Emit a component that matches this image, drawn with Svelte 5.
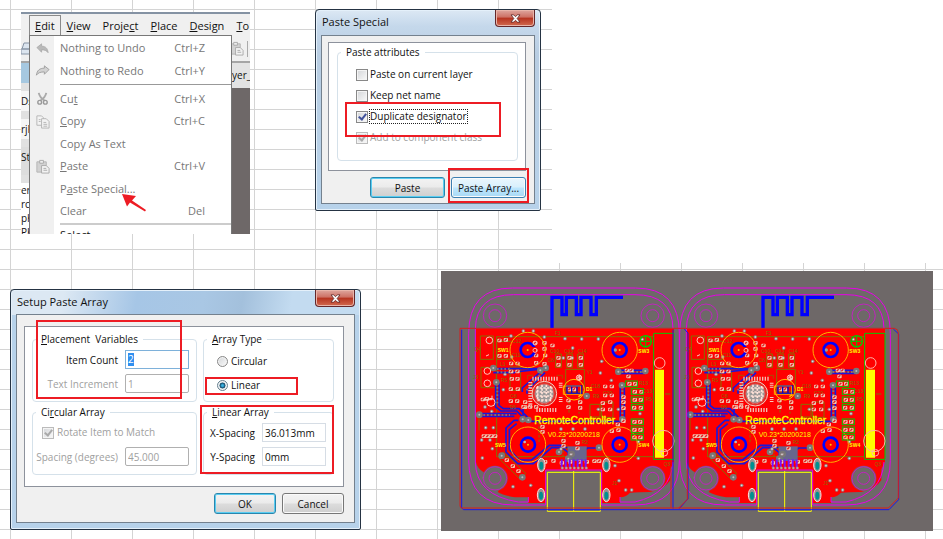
<script>
  const menus = [['', 'E', 'dit'], ['', 'V', 'iew'], ['Proje', 'c', 't'], ['', 'P', 'lace'], ['', 'D', 'esign'], ['', 'T', 'o']];
  const history = [
    { icon: 'undo', label: ['Nothing to Undo', '', ''], keys: 'Ctrl+Z' },
    { icon: 'redo', label: ['Nothing to Redo', '', ''], keys: 'Ctrl+Y' }
  ];
  const clipboard = [
    { icon: 'cut', label: ['Cu', 't', ''], keys: 'Ctrl+X' },
    { icon: 'copy', label: ['', 'C', 'opy'], keys: 'Ctrl+C' },
    { icon: '', label: ['Copy As Text', '', ''], keys: '' },
    { icon: 'paste', label: ['', 'P', 'aste'], keys: 'Ctrl+V' },
    { icon: '', label: ['P', 'a', 'ste Special...'], keys: '' },
    { icon: '', label: ['Clear', '', ''], keys: 'Del' }
  ];
  const attributes = [
    { label: 'Paste on current layer' },
    { label: 'Keep net name' },
    { label: 'Duplicate designator', checked: true, focus: true },
    { label: 'Add to component class', checked: true, disabled: true }
  ];

  // Board artwork, three units to the pixel.
  const shift = (dx, dy, list) => list.map(([x, y]) => [x + dx, y + dy]);
  const pads = [
    ...shift(60, 180, [[133,55],[152,53],[133,101],[152,101],[168,124],[187,124],[168,148],[187,148],[170,170],[187,170],[167,201],[188,201],[167,237],[186,237],[240,62],[240,85],[268,62],[268,80],[292,70],[243,100],[243,122],[270,100],[268,125],[310,107],[310,128],[343,107],[343,128],[340,235],[340,255],[210,255],[210,240],[83,232],[95,230]]),
    ...shift(405, 180, [[32,107],[32,128],[28,168],[105,193],[125,193],[105,220],[125,220],[98,243],[98,262],[120,240],[120,262],[30,240],[30,257],[160,225],[160,240],[160,258],[170,145],[184,145],[175,163],[178,185],[195,185],[194,209],[214,209],[194,233],[212,233],[192,257],[212,257],[12,202],[-2,202]]),
    ...shift(60, 459, [[86,63],[97,63],[108,63],[120,63],[205,-25],[225,-25],[243,-25],[262,35],[262,50],[325,77],[325,92],[367,83],[367,100],[270,140],[295,137],[320,143],[345,140],[372,140],[395,140],[418,138],[432,138],[155,135],[173,153],[190,168],[488,28],[505,18],[470,48],[490,45],[538,20],[555,20],[538,44],[556,44],[538,67],[556,67]])
  ];
  const vias = [
    ...shift(60, 180, [[205,27],[235,27],[168,42],[330,50],[325,108],[352,108],[170,105],[268,45],[145,203],[150,157],[110,268],[90,255]]),
    ...shift(405, 180, [[35,51],[85,51],[95,118],[91,153],[124,175],[217,52],[85,262],[145,262],[210,275],[8,78]]),
    ...shift(60, 459, [[92,38],[115,38],[80,75],[105,75],[82,129],[112,101],[87,188],[227,211],[174,215],[480,152],[492,197],[550,130],[512,225],[530,225],[318,42],[354,42],[390,42],[550,80],[318,102],[348,118]])
  ];
  const bigVias = [[175,318],[184,361],[332,318],[316,325],[550,329],[631,327],[561,370],[133,458],[263,472],[280,474],[562,472],[200,581],[262,646],[492,557],[372,570],[455,402],[410,576],[400,590]];
  const switches = [[278, 264], [554, 264], [279, 548], [554, 548]];
  const mounts = [[180, 161], [653, 161], [180, 649], [653, 649]];
  const lugs = [[319, 609], [514, 609], [318, 699], [514, 699]];
  const greenBoxes = [[571,357],[589,380],[589,405],[589,428],[589,471],[589,495],[589,517]];
  const designators = [['F1',360,220],['C10',346,274],['C13',388,274],['C14',428,274],['Y1',455,337],['C12',232,243],['C11',230,285],['L1',196,311],['C8',338,300],['R5',198,360],['C8',226,407],['C18',468,379],['R9',474,407],['R13',612,370],['C13',625,393],['R5',632,418],['Q4',118,267],['J3',114,352],['D8',224,442],['C20',504,400],['J1',532,669],['C1',382,560],['R2',440,545],['Q3',686,611]];
  const fine = Array.from({ length: 7 }, (_, i) => i);
</script>

{#snippet mnemonic([before, key, after])}{before}{#if key}<u>{key}</u>{/if}{after}{/snippet}

{#snippet icon(name)}
  <svg class="icon" viewBox="0 0 16 16" aria-hidden="true">
    {#if name === 'undo'}
      <path d="M2 7 7 3v2.500c4.500 0 6.500 2.500 7 7-1.500-2.500-4-3-7-3V12z" fill="#b9b9b9" stroke="#a2a2a2" stroke-width=".7" />
    {:else if name === 'redo'}
      <path d="M15 7 10 3v2.500c-5 0-8 2.500-8.500 7.500 1.500-2.500 4.500-3.500 8.500-3.500V12z" fill="#d2d2d2" stroke="#999" stroke-width=".9" />
    {:else if name === 'cut'}
      <path d="M4 2q1 5 6 8M12 2q-1 5-6 8" fill="none" stroke="#aaa" stroke-width="2" />
      <circle cx="5" cy="12" r="2" fill="none" stroke="#999" stroke-width="1.500" /><circle cx="11" cy="12" r="2" fill="none" stroke="#999" stroke-width="1.500" />
    {:else if name === 'copy'}
      <path d="M2 2h5l2 2v8H2z" fill="#f3f3f3" stroke="#b4b4b4" /><path d="M7 5h5l3 3v7H7z" fill="#f3f3f3" stroke="#b4b4b4" /><path d="M4 6h2M4 8h2M9 9h3M9 11h4M9 13h4" stroke="#b4b4b4" />
    {:else if name === 'paste'}
      <path d="M2 3h10v11H2z" fill="#d2d2d2" stroke="#b4b4b4" /><path d="M5 1.500h4v3H5z" fill="#eee" stroke="#aaa" /><path d="M7 7h5l3 3v5H7z" fill="#f3f3f3" stroke="#aaa" /><path d="M9 10h3M9 12h4" stroke="#aaa" />
    {/if}
  </svg>
{/snippet}

{#snippet rows(items)}
  {#each items as item}
    <button class="item" role="menuitem">
      <span class="gutter">{@render icon(item.icon)}</span>
      <span class="name">{@render mnemonic(item.label)}</span>
      <span>{item.keys}</span>
    </button>
  {/each}
{/snippet}

{#snippet titlebar(title)}
  <header>
    <h2>{title}</h2>
    <button class="close" aria-label="Close">
      <svg viewBox="0 0 12 10" aria-hidden="true"><path d="M1 1h3l2 2 2-2h3L7.800 5 11 9H8L6 7 4 9H1l3.200-4z" fill="#fff" stroke="#5c2a2a" stroke-width=".9" /></svg>
    </button>
  </header>
{/snippet}

{#snippet board()}
  <path d="M123 201H717V600L706 622V655Q690 680 645 690Q610 690 585 692Q575 704 555 706V723H500V625H332V723H280V706H240Q205 700 188 690L200 670 145 630Q126 618 123 600Z" fill="#f00" />
  <g fill="none" stroke="#e800e8" stroke-width="3">
    <path d="M101 215Q101 78 232 78H602Q733 78 733 215V595Q733 729 600 729H500M101 215V595Q101 729 235 729H332" />
    <path d="M121 200Q124 98 235 98H600Q712 98 714 200M121 200V600Q123 700 250 720H280V705M714 600Q708 695 600 720H555V705M332 729V624H500V729" />
  </g>
  <path d="M351 199V106H381V158H394V106H424V158H438V106H468V158H484V106H564" fill="none" stroke="#00f" stroke-width="10" />
  <g fill="none" stroke="#857000" stroke-width="3">
    <path d="M185 224H655M185 224V584H655M185 224V292H230M185 238H230" />
    <path d="M136 222h39v70h-39zM138 316h46v61h-46zM392 322h56v68h-56zM205 570l67 64-14 20-67-66zM690 396h16M132 455v50" />
    <path d="M465 427h30v38h-30zM500 420h34v46h-34zM225 315h32v70h-32zM362 276h17v40h-17zM428 276h17v40h-17zM395 276h17v40h-17z" />
    <path d="M402 405v50M432 410v45M312 480v60M384 525v60" stroke-dasharray="8 5" />
  </g>
  <g fill="none" stroke="#1717dd" stroke-width="5">
    <path d="M175 320H330M175 332H240M240 330l90-10M182 362V435L198 447H245L270 472M192 362V430L205 440H252L290 478H400" />
    <path d="M133 455H245M133 463H238M250 475H237L213 498V570L248 605H295L350 557H400M245 485L223 503V562L252 594H290L343 550H390" />
    <path d="M262 390V378L318 328M276 395V385L330 332M264 430V470M556 375V472M568 375V472M550 325H630M550 334H630M430 600V580L458 558H490M385 560l15 12v20" />
    <path d="M400 478H560" />
  </g>
  <path d="M398 553h57v44h-57z" fill="#68668d" />
  <path d="M562 385v85M560 330h60M186 321h40M186 331h50M275 385l48-55M187 375v50M145 459h80" stroke="#777" stroke-width="6" stroke-dasharray="5 6" fill="none" />
  <g font-size="15" fill="#857000">
    {#each designators as [label, x, y]}<text {x} {y}>{label}</text>{/each}
  </g>
  {#each bigVias as [x, y]}<circle cx={x} cy={y} r="10" fill="#777" /><circle cx={x} cy={y} r="3" fill="#bbb" />{/each}
  {#each vias as [x, y]}<circle cx={x} cy={y} r="5" fill="#a09b9b" stroke="#8c5656" /><circle cx={x} cy={y} r="2" fill="#eee" />{/each}
  {#each pads as [x, y]}<rect x={x - 6} y={y - 5} width="13" height="11" rx="3" fill="#f0c8b4" /><path d="M{x - 3} {y + 3}l6-6" stroke="#e02020" stroke-width="4" />{/each}
  {#each mounts as [x, y], i}
    {#if i > 1}<circle cx={x} cy={y} r="38" fill="#6e6868" />{/if}
    <circle cx={x} cy={y} r="35" class="magenta" /><circle cx={x} cy={y} r="18" class="magenta" />
  {/each}
  {#each switches as [x, y]}
    <circle cx={x} cy={y} r="53" fill="none" stroke="#ffb000" stroke-width="3" />
    <circle cx={x} cy={y} r="21" fill="none" stroke="#00f" stroke-width="8" />
    <circle cx={x} cy={y} r="3" fill="#ffc000" />
  {/each}
  <path d="M290 255h14v16h-14z" fill="#f00" /><circle cx="300" cy="243" r="6" class="pale" /><circle cx="300" cy="265" r="6" class="pale" /><circle cx="541" cy="264" r="5" fill="#999" /><circle cx="269" cy="540" r="4" fill="#bbb" />

  <circle cx="328" cy="395" r="37" fill="#e03028" stroke="#f5cdc0" stroke-width="3" />
  <circle cx="328" cy="395" r="29" fill="#999" stroke="#e55" stroke-width="2" />
  <path d="M303 378H353M303 390H353M303 402H353M308 414H348M308 372V418M321 368V424M334 368V424M347 372V418" stroke="#ffe2d8" stroke-width="5" stroke-dasharray="7 4" />
  <path d="M292 350H370M304 444H368M286 360V434" stroke="#f3bfb2" stroke-width="12" stroke-dasharray="4 4" />
  <path d="M377 362V378M377 405V420" stroke="#f8c9bd" stroke-width="11" stroke-dasharray="3 3" />
  <path d="M278 352V340H295M365 340H382V350" fill="none" stroke="#857000" stroke-width="2" />
  <circle cx="417" cy="383" r="31" fill="none" stroke="#ffc400" stroke-width="3" />
  <path d="M396 372h44v22h-44zM410 372v22M426 372v22" fill="none" stroke="#00c" stroke-width="4" /><path d="M385 372h52v25h-52z" fill="none" stroke="#ffe000" stroke-width="2" />
  <path d="M430 404l10-6" stroke="#ffd000" stroke-width="4" />
  <g fill="none" stroke="#ffc8bd" stroke-width="3">
    <circle cx="163" cy="235" r="10" /><circle cx="157" cy="327" r="10" /><circle cx="157" cy="364" r="10" /><circle cx="168" cy="421" r="12" />
    <path d="M153 282l9-4M146 413h25v-12M433 338v18" /><circle cx="432" cy="347" r="8" />
  </g>

  <path d="M660 323h27v264h-27z" fill="#ff0" />
  <path d="M656 214H717V592H656Z" fill="none" stroke="#0c0" stroke-width="3" />
  <circle cx="674" cy="303" r="16" class="pale" /><circle cx="685" cy="537" r="32" class="pale" /><circle cx="688" cy="572" r="10" class="pale" />
  <circle cx="632" cy="238" r="17" fill="none" stroke="#0c0" stroke-width="4" /><path d="M614 238H650M632 222V255" stroke="#0c0" stroke-width="3" />
  {#each greenBoxes as [x, y]}<rect {x} {y} width="36" height="17" fill="none" stroke="#0c0" stroke-width="3" />{/each}

  {#each fine as i}<path d="M{380 + i * 12} 592v25" stroke="#71f" stroke-width="6" /><circle cx={382 + i * 12} cy="618" r="4" fill="#aaa" stroke="#c55" />{/each}
  {#each lugs as [x, y]}<ellipse cx={x} cy={y} rx="11" ry="20" fill="#9a8f8f" stroke="#ffe0dc" stroke-width="3" /><ellipse cx={x} cy={y + 2} rx="6" ry="12" fill="#009090" />{/each}
  <path d="M337 631H496V748H337ZM416 627V748" fill="none" stroke="#ff0" stroke-width="3" />
  <g fill="#ff0">
    <text x="298" y="486" font-size="31" stroke="#ff0" stroke-width="1">RemoteController</text>
    <text x="338" y="524" font-size="21">V0.23*20200218</text>
    <g font-size="15" font-weight="bold">
      <text x="188" y="269">SW1</text><text x="610" y="272">SW3</text><text x="180" y="556">SW5</text><text x="610" y="555">SW4</text><text x="453" y="386">D1</text>
    </g>
  </g>
{/snippet}

<main>
  <div class="blank"></div>

  <section class="editor" aria-label="Edit menu">
    <nav class="menubar">
      {#each menus as menu, i}<button class:open={i === 0}>{@render mnemonic(menu)}</button>{/each}
    </nav>
    <div class="toolbar">
      <svg viewBox="0 0 10 14" width="10" height="14" aria-hidden="true"><path d="M3 1h7v6H1zM0 7h10v5H0z" fill="#dce5ef" stroke="#8794a5" /></svg>
      <span class="tools">{@render icon('paste')}</span>
    </div>
    <div class="workspace">
      <div class="files">
        <span class="active"></span><span>Ds</span><span>rjP</span><span class="tall">St</span>
        <span class="leaf">er_</span><span class="leaf">rce</span><span class="leaf">pK</span><span class="leaf">PK</span>
      </div>
      <div class="document"><span>yer_</span></div>
    </div>
    <div class="dropdown" role="menu">
      {@render rows(history)}
      <hr />
      {@render rows(clipboard)}
      <hr class="soft" />
      <button class="item last" role="menuitem"><span class="gutter"></span><span class="name">Select</span></button>
    </div>
    <svg class="arrow" viewBox="0 0 24 18" aria-hidden="true"><path d="M0 0 14 2 10 6.500 24 16 23 17.500 8 8.500 5 12.500Z" fill="#ed1c24" /></svg>
  </section>

  <section class="window special">
    {@render titlebar('Paste Special')}
    <form class="client">
      <div class="panel">
        <fieldset>
          <legend>Paste attributes</legend>
          {#each attributes as a}
            <label class="choice" class:off={a.disabled}>
              <input type="checkbox" checked={a.checked} disabled={a.disabled} /><span class:focus={a.focus}>{a.label}</span>
            </label>
          {/each}
        </fieldset>
      </div>
      <div class="actions">
        <button type="button" class="default">Paste</button>
        <button type="button" class="hot">Paste Array...</button>
      </div>
    </form>
    <i class="mark duplicate"></i>
    <i class="mark array"></i>
  </section>

  <section class="window setup">
    {@render titlebar('Setup Paste Array')}
    <form class="client">
      <div class="panel groups">
        <fieldset>
          <legend><u>P</u>lacement&nbsp; Variables</legend>
          <div class="field"><label for="count">Item Count</label><span class="box lit"><mark>2</mark><input id="count" value="" aria-label="Item Count" /></span></div>
          <div class="field off"><label for="increment">Text Increment</label><input id="increment" value="1" disabled /></div>
        </fieldset>
        <fieldset>
          <legend><u>A</u>rray Type</legend>
          <label class="choice"><input type="radio" name="type" /><span>Circular</span></label>
          <label class="choice"><input type="radio" name="type" checked /><span>Linear</span></label>
        </fieldset>
        <fieldset>
          <legend>Ci<u>r</u>cular Array</legend>
          <label class="choice off"><input type="checkbox" checked disabled /><span>Rotate Item to Match</span></label>
          <div class="field off"><label for="degrees">Spacing (degrees)</label><input id="degrees" value="45.000" disabled /></div>
        </fieldset>
        <fieldset>
          <legend><u>L</u>inear Array</legend>
          <div class="field"><label for="xs">X-Spacing</label><input id="xs" value="36.013mm" /></div>
          <div class="field"><label for="ys">Y-Spacing</label><input id="ys" value="0mm" /></div>
        </fieldset>
      </div>
      <div class="actions">
        <button type="button" class="default">OK</button>
        <button type="button">Cancel</button>
      </div>
    </form>
    <i class="mark placement"></i>
    <i class="mark linear"></i>
    <i class="mark spacing"></i>
  </section>

  <svg class="pcb" viewBox="18 27 1476 780" role="img" aria-label="Two copies of the board placed side by side">
    <path d="M18 27H1494V807H18Z" fill="#6e6868" />
    {@render board()}
    <g transform="translate(633 0)">{@render board()}</g>
    <g fill="none" stroke-width="3">
      <path d="M80 203V738L86 743H1362L1391 713V216L1375 201M714 203V740M748 201L759 213V710L733 740" stroke="#1a1ae6" />
      <path d="M75 199H1378Q1390 201 1390 212V708L1360 738H80Q75 738 75 730ZM708 620V738M757 620V712L731 738" stroke="#d91c1c" />
    </g>
  </svg>
</main>

<style>
  :global(body) { margin: 0; background: #fff; }
  main {
    position: relative;
    min-height: 100vh;
    overflow: hidden;
    font: 10px/14px "Open Sans", "Noto Sans", sans-serif;
    color: #111;
    background-image: linear-gradient(90deg, #d4d4d4 1px, transparent 1px), linear-gradient(#d4d4d4 1px, transparent 1px);
    background-size: 61px 20px;
    background-position: 10px 9px;
  }
  button, input { font: inherit; color: inherit; box-sizing: border-box; margin: 0; }
  u { text-underline-offset: 1px; }
  .blank { position: absolute; left: 552px; right: 0; top: 0; height: 263px; background: #fff; }

  .editor { position: absolute; left: 21px; top: 12px; width: 229px; height: 222px; overflow: hidden; display: flex; flex-direction: column; background: #f0f0f0; font-size: 11px; }
  .menubar { display: flex; height: 24px; box-sizing: border-box; border-top: 2px solid #8492a3; padding-left: 8px; }
  .menubar button { flex: none; border: 0; background: none; padding: 2px 6px 0; }
  .menubar .open { border: 1px solid #8a8a8a; border-bottom: 0; padding: 0 5px; margin-top: 1px; }
  .toolbar { display: flex; justify-content: space-between; align-items: center; height: 25px; border-bottom: 2px solid #a5a5a5; }
  .tools { width: 18px; height: 16px; border-right: 1px solid #aaa; margin-right: 2px; }
  .workspace { flex: 1; min-height: 0; display: flex; justify-content: space-between; }
  .files { width: 8px; display: flex; flex-direction: column; overflow: hidden; background: #e1e1e1; font-size: 10px; }
  .files span { flex: none; height: 20px; line-height: 20px; margin-bottom: 8px; background: #f6f6f6; }
  .files .active { background: #a6c8e0; }
  .files .tall { height: 28px; background: #ddd; }
  .files .leaf { height: 14px; line-height: 14px; margin: 0; background: #fff; }
  .document { width: 18px; background: #6e6868; }
  .document span { display: block; height: 25px; line-height: 24px; background: #e3e3e3; overflow: hidden; font-size: 10px; }
  .dropdown { position: absolute; left: 8px; top: 23px; width: 203px; box-sizing: border-box; border: 1px solid #777; border-bottom: 0; padding-top: 1px; background: linear-gradient(90deg, #f0f0f0 24px, #fff 24px); color: #777; }
  .item { display: flex; align-items: center; width: 100%; height: 22px; border: 0; background: none; padding: 0 26px 0 0; text-align: left; }
  .item:nth-child(2n) { height: 23px; }
  .gutter { width: 24px; text-align: center; margin-right: 6px; line-height: 1px; }
  .name { flex: 1; }
  .icon { width: 15px; height: 15px; }
  hr { margin: 2px 0 2px 30px; border: 0; border-top: 1px solid #999; }
  .soft { margin: 1px 0 0 30px; border-top: 2px solid #ccc; }
  .dropdown .last { height: 20px; color: #111; }
  .arrow { position: absolute; left: 101px; top: 182px; width: 24px; height: 18px; }

  .window { position: absolute; box-sizing: border-box; border: 1px solid #253343; border-radius: 4px 4px 2px 2px; padding: 0 5px 6px; box-shadow: inset 0 0 0 1px #e4f0fa; }
  .special { left: 315px; top: 9px; width: 226px; background: linear-gradient(#dce8f4, #c5d8eb 16px, #b8cde2 45px, #b7d2ea); }
  .setup { left: 10px; top: 289px; width: 351px; background: linear-gradient(100deg, #dce8f3 15%, #a6c6e6 36%, #a9c7e4 55%, #a3c0dc 66%, #c3dbf0 80%) top / 100% 25px no-repeat, #b7d2ea; }
  header { display: flex; justify-content: space-between; height: 25px; }
  .setup header { height: 24px; }
  h2 { margin: 0 1px; font-size: 11px; line-height: 24px; font-weight: 400; }
  .close { width: 40px; height: 17px; border: 1px solid #64272a; border-top: 0; border-radius: 0 0 4px 4px; padding: 0; background: linear-gradient(#dfa79f, #cd7064 45%, #b63320 50%, #d16a4f); box-shadow: inset 0 0 0 1px #e9b5aa; }
  .close svg { display: block; width: 11px; height: 9px; margin: 0 auto; }
  .client { border: 1px solid #74818e; background: #f0f0f0; padding: 6px 8px 5px 6px; }
  .setup .client { padding: 11px 10px 8px 7px; }
  .panel { border: 1px solid #8d929c; background: #fff; padding: 2px 7px 9px 8px; }
  fieldset { min-width: 0; margin: 0; border: 1px solid #d5e1ea; border-radius: 4px; padding: 5px 8px 12px 18px; }
  legend { margin-left: -15px; padding: 0 5px; }
  .choice { display: flex; align-items: center; height: 21px; gap: 2px; }
  .choice span { white-space: nowrap; line-height: 13px; }
  .focus { outline: 1px dotted #222; }
  .off { color: #a0a0a0; }
  input[type="checkbox"], input[type="radio"] { appearance: none; flex: none; width: 12px; height: 12px; border: 1px solid #888; background: linear-gradient(135deg, #d3d5d8, #fafafa); box-shadow: inset 0 0 0 1px #f4f4f4; }
  input[type="checkbox"]:checked::after { content: ""; display: block; width: 3px; height: 6px; margin: 0 0 0 3px; border: solid #41529b; border-width: 0 2px 2px 0; transform: rotate(38deg); }
  input[type="checkbox"]:disabled { border-color: #bbb; }
  input[type="checkbox"]:disabled::after { border-color: #aaa; }
  input[type="radio"] { width: 11px; height: 11px; border-radius: 50%; }
  input[type="radio"]:checked { border-color: #66808f; background: radial-gradient(#3ab5e6 12%, #11405e 42%, #e6eff5 52%); }
  .actions { display: flex; justify-content: flex-end; gap: 6px; padding-top: 6px; }
  .actions button { width: 75px; height: 21px; padding: 0; border: 1px solid #777; border-radius: 3px; background: linear-gradient(#f3f3f3, #ebebeb 48%, #dcdcdc 52%, #cfcfcf); box-shadow: inset 0 0 0 1px #fafafa; }
  .setup .actions button { width: 62px; }
  .actions .default { border-color: #2a86ad; box-shadow: inset 0 0 0 1px #59cdf2; }
  .actions .hot { border-color: #3c7fb1; background: linear-gradient(#eaf6fd, #d9f0fc 48%, #bee6fd 52%, #a7d9f5); }

  .groups { display: grid; grid-template-columns: 165fr 131fr; gap: 3px 6px; padding: 5px 9px 11px 7px; }
  .groups fieldset { display: flex; flex-direction: column; gap: 5px; padding: 4px 7px 8px 9px; }
  .groups legend { margin-left: -6px; }
  .groups .choice { height: 19px; gap: 3px; }
  .groups fieldset:nth-child(2) { padding: 6px 7px 6px 13px; }
  .groups fieldset:nth-child(2) legend { margin-left: -10px; }
  .field { display: flex; align-items: center; justify-content: flex-end; gap: 7px; white-space: nowrap; }
  .field > input, .box { width: 64px; height: 19px; box-sizing: border-box; border: 1px solid #d6dde5; padding: 0 2px; background: #fff; }
  .field.off > input { border-color: #b0b0b0; border-radius: 2px; }
  .box { display: flex; align-items: center; }
  .field > .lit { border-color: #7eb1da; }
  .box input { flex: 1; min-width: 0; border: 0; padding: 0; outline: 0; background: none; }
  mark { background: #2f8ff0; color: #fff; line-height: 13px; }

  .mark { position: absolute; box-sizing: border-box; border: 2px solid #ed1c24; pointer-events: none; }
  .duplicate { left: 29px; top: 92px; width: 156px; height: 35px; }
  .array { left: 132px; top: 158px; width: 81px; height: 35px; }
  .placement { left: 25px; top: 30px; width: 146px; height: 79px; }
  .linear { left: 194px; top: 87px; width: 93px; height: 18px; }
  .spacing { left: 189px; top: 115px; width: 134px; height: 69px; }

  .pcb { position: absolute; left: 441px; top: 271px; width: 492px; height: 260px; font-family: "Liberation Sans", sans-serif; }
  .magenta { fill: none; stroke: #e800e8; stroke-width: 2; }
  .pale { fill: none; stroke: #ffb4a8; stroke-width: 3; }
</style>
